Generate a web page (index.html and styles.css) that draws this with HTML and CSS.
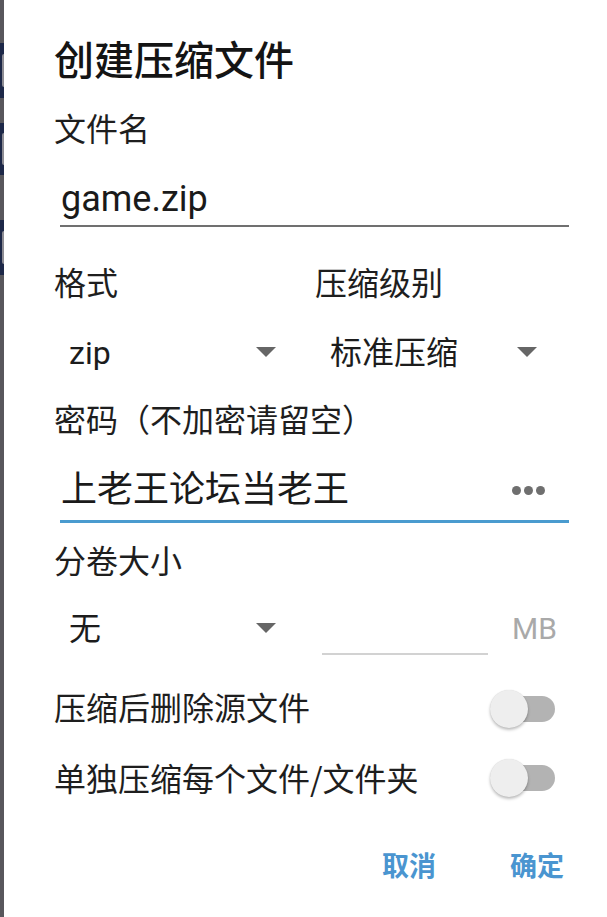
FILE: index.html
```html
<!DOCTYPE html>
<html lang="zh-CN">
<head>
<meta charset="utf-8">
<title>创建压缩文件</title>
<link rel="stylesheet" href="styles.css">
</head>
<body>
<div class="page">
  <div class="strip">
    <div class="strip-block b1"><span class="tab"></span></div>
    <div class="strip-block b2"><span class="tab"></span></div>
    <div class="strip-block b3"><span class="tab"></span></div>
  </div>
  <div class="dialog">
    <h1 class="title">创建压缩文件</h1>

    <div class="label label-name">文件名</div>
    <div class="field field-name">
      <span class="field-text latin">game.zip</span>
    </div>

    <div class="two-col">
      <div class="col">
        <div class="label">格式</div>
        <div class="dropdown">
          <span class="dd-text latin">zip</span>
          <span class="arrow"></span>
        </div>
      </div>
      <div class="col">
        <div class="label">压缩级别</div>
        <div class="dropdown">
          <span class="dd-text">标准压缩</span>
          <span class="arrow"></span>
        </div>
      </div>
    </div>

    <div class="label label-pwd">密码（不加密请留空）</div>
    <div class="field field-pwd">
      <span class="field-text">上老王论坛当老王</span>
      <span class="dots"><i></i><i></i><i></i></span>
    </div>

    <div class="label label-split">分卷大小</div>
    <div class="split-row">
      <div class="dropdown">
        <span class="dd-text">无</span>
        <span class="arrow"></span>
      </div>
      <div class="num-input"></div>
      <span class="unit latin">MB</span>
    </div>

    <div class="switch-row first">
      <span class="switch-label">压缩后删除源文件</span>
      <span class="switch"><span class="thumb"></span></span>
    </div>
    <div class="switch-row second">
      <span class="switch-label">单独压缩每个文件/文件夹</span>
      <span class="switch"><span class="thumb"></span></span>
    </div>

    <div class="actions">
      <span class="btn">取消</span>
      <span class="btn">确定</span>
    </div>
  </div>
</div>
</body>
</html>
```

FILE: styles.css
```css
* { box-sizing: border-box; }

html, body {
  margin: 0;
  padding: 0;
  background: #ffffff;
}

body {
  font-family: Roboto, "Noto Sans CJK SC", sans-serif;
  color: #1c1c1c;
}

.page {
  display: flex;
  width: 607px;
  height: 917px;
  overflow: hidden;
}

/* left background strip */
.strip {
  width: 4px;
  flex: none;
  background: #58575c;
  display: flex;
  flex-direction: column;
}
.strip-block {
  background: #1d2848;
  display: flex;
  align-items: center;
  justify-content: flex-end;
}
.strip-block .tab {
  width: 2px;
  height: 60%;
  background: #8d8c93;
  border-radius: 2px 0 0 2px;
}
.b1 { margin-top: 43px; height: 55px; }
.b2 { margin-top: 25px; height: 52px; }
.b3 { margin-top: 45px; height: 55px; }

.dialog {
  flex: 1;
  min-width: 0;
  padding: 36px 38px 0 50px;
  display: flex;
  flex-direction: column;
}

.latin { font-family: Roboto, sans-serif; }

.title {
  margin: 0;
  font-family: "Noto Sans CJK SC", sans-serif;
  font-size: 40px;
  font-weight: 500;
  height: 48px;
  line-height: 44px;
  padding-bottom: 4px;
  color: #141414;
}

.label {
  font-family: "Noto Sans CJK SC", sans-serif;
  font-size: 32px;
  height: 40px;
  line-height: 34px;
  padding-bottom: 6px;
  color: #1e1e1e;
  white-space: nowrap;
}
.label-name { margin-top: 26px; }
.label-pwd { margin-top: 28px; }
.label-split { margin-top: 19px; }

.field {
  margin-left: 6px;
  display: flex;
  align-items: center;
  justify-content: space-between;
}
.field-text {
  font-family: Roboto, "Noto Sans CJK SC", sans-serif;
  font-size: 36px;
  line-height: 44px;
  height: 44px;
  padding-left: 1px;
  color: #1a1a1a;
}
.field-name {
  padding: 27px 0 4px;
  border-bottom: 2px solid #707070;
}
.field-pwd {
  padding: 27px 0 8px;
  border-bottom: 3px solid #4a9bcf;
}

.dots {
  display: flex;
  gap: 3px;
  margin-right: 24px;
}
.dots i {
  width: 9px;
  height: 9px;
  border-radius: 50%;
  background: #6f6f6f;
}

.two-col {
  margin-top: 37px;
  display: grid;
  grid-template-columns: 261px 1fr;
}

.dropdown {
  width: 222px;
  height: 40px;
  padding-left: 15px;
  display: flex;
  align-items: center;
  justify-content: space-between;
}
.two-col .dropdown { margin-top: 29px; }
.dd-text {
  font-family: Roboto, "Noto Sans CJK SC", sans-serif;
  font-size: 32px;
  line-height: 40px;
  color: #1c1c1c;
}
.arrow {
  width: 0;
  height: 0;
  border-left: 10px solid transparent;
  border-right: 10px solid transparent;
  border-top: 10px solid #666666;
  margin-top: -3px;
}

.split-row {
  margin-top: 27px;
  display: flex;
  align-items: flex-start;
}
.num-input {
  margin-left: 46px;
  width: 166px;
  height: 46px;
  border-bottom: 2px solid #d2d2d2;
}
.unit {
  margin-left: 24px;
  font-size: 30px;
  line-height: 40px;
  color: #a9a9a9;
}

.switch-row {
  height: 48px;
  display: flex;
  align-items: center;
  justify-content: space-between;
}
.switch-row.first { margin-top: 30px; }
.switch-row.second { margin-top: 21px; }
.switch-label {
  font-family: "Noto Sans CJK SC", Roboto, sans-serif;
  font-size: 32px;
  line-height: 34px;
  padding-bottom: 6px;
  color: #1e1e1e;
  white-space: nowrap;
}
.switch-row.second .switch-label { line-height: 38px; padding-bottom: 2px; }
.switch {
  position: relative;
  width: 63px;
  height: 26px;
  margin-right: 14px;
  border-radius: 13px;
  background: #b3b3b3;
}
.thumb {
  position: absolute;
  left: -2px;
  top: -6px;
  width: 38px;
  height: 38px;
  border-radius: 50%;
  background: #eeeeee;
  box-shadow: 0 2px 3px rgba(0, 0, 0, 0.25), 0 0 1px rgba(0, 0, 0, 0.15);
}

.actions {
  margin-top: 45px;
  display: flex;
  justify-content: flex-end;
  gap: 74px;
  padding-right: 5px;
}
.btn {
  font-family: "Noto Sans CJK SC", sans-serif;
  font-size: 27px;
  font-weight: 700;
  line-height: 36px;
  padding-bottom: 4px;
  color: #4a95d0;
}
```
